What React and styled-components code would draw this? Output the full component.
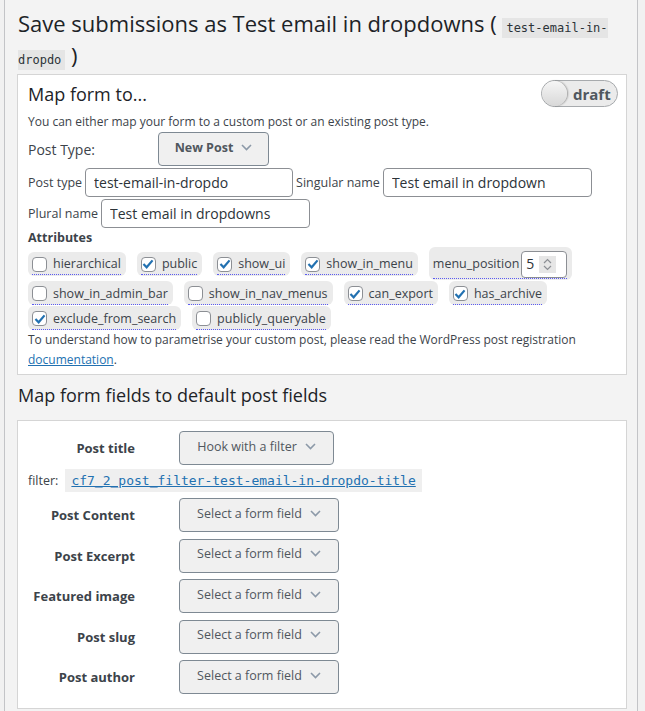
import React from 'react';
import styled, { createGlobalStyle } from 'styled-components';

const Global = createGlobalStyle`
  body {
    margin: 0;
    background: #f1f1f1;
    font-family: "Open Sans", "Noto Sans", sans-serif;
    color: #3c434a;
  }
`;

const Page = styled.div`
  padding: 0 7px 0 4px;
`;

const Panel = styled.div`
  background: #f3f3f3;
  border-left: 1px solid #c3c4c7;
  border-right: 1px solid #c3c4c7;
  padding: 7px 10px 2px 12px;
  min-height: 711px;
  box-sizing: border-box;
`;

const Title = styled.h2`
  margin: 0 0 3px 1px;
  font-size: 22px;
  font-weight: 400;
  line-height: 32px;
  color: #1d2327;
`;

const Code = styled.code`
  font-family: "DejaVu Sans Mono", monospace;
  font-size: 12px;
  line-height: 1;
  background: #e5e5e5;
  padding: 3px 4px;
  color: #2c3338;
`;

const Box = styled.div`
  background: #fff;
  border: 1px solid #d5d5d5;
  padding: ${p => p.$pad || '5px 8px 4px 10px'};
`;

const BoxHead = styled.div`
  display: flex;
  justify-content: space-between;
  align-items: center;
`;

const BoxTitle = styled.h3`
  margin: 0;
  font-size: 18px;
  font-weight: 400;
  color: #1d2327;
`;

const Toggle = styled.div`
  display: flex;
  align-items: center;
  width: 77px;
  height: 27px;
  box-sizing: border-box;
  border: 1px solid #a7aaad;
  border-radius: 14px;
  background: #ebebeb;
  gap: 6px;
`;

const Knob = styled.span`
  width: 25px;
  height: 25px;
  border-radius: 50%;
  background: linear-gradient(#f6f6f6, #d8d8d8);
  box-shadow: 1px 0 2px rgba(0, 0, 0, 0.35);
`;

const ToggleText = styled.span`
  font-weight: 700;
  font-size: 15px;
  color: #50575e;
`;

const Note = styled.p`
  margin: ${p => p.$m || '7px 0 0'};
  font-size: 12px;
  line-height: 20px;
`;

const Row = styled.div`
  display: flex;
  align-items: center;
  gap: ${p => p.$gap || '3px'};
  margin-top: ${p => p.$mt || '2px'};
`;

const Label = styled.span`
  font-size: ${p => p.$size || '12.5px'};
  width: ${p => p.$w || 'auto'};
`;

const DropButton = styled.button`
  display: inline-flex;
  align-items: center;
  justify-content: center;
  gap: 8px;
  width: ${p => p.$w};
  height: ${p => p.$h || '34px'};
  background: #f0f0f0;
  border: 1px solid #7e8993;
  border-radius: 4px;
  font-family: inherit;
  font-size: 12.5px;
  font-weight: ${p => (p.$bold ? 700 : 400)};
  color: #50575e;
  padding: 0 0 4px;
`;

const TextInput = styled.input`
  width: ${p => p.$w};
  height: 29px;
  box-sizing: border-box;
  border: 1px solid #8c8f94;
  border-radius: 4px;
  font-family: inherit;
  font-size: 14px;
  color: #2c3338;
  padding: 0 8px;
`;

const SubHead = styled.div`
  font-size: 12.5px;
  font-weight: 700;
  line-height: 16px;
  margin-top: 2px;
`;

const Chips = styled.div`
  display: flex;
  flex-wrap: wrap;
  align-items: center;
  column-gap: 11px;
  row-gap: 1px;
  margin-top: ${p => p.$mt || '0'};
`;

const Chip = styled.label`
  display: inline-flex;
  align-items: center;
  box-sizing: border-box;
  background: #ebebeb;
  border-radius: 6px;
  padding: 2px 5px 0 4px;
  height: ${p => p.$h || '24px'};
`;

const ChipInner = styled.span`
  display: inline-flex;
  align-items: center;
  gap: 6px;
  border-bottom: 1px dotted #5b5bf0;
  font-size: 12.5px;
  color: #3c434a;
  line-height: 20px;
`;

const Box16 = styled.span`
  width: 13px;
  height: 13px;
  border: 1px solid #8c8f94;
  border-radius: 4px;
  background: #fff;
  display: inline-flex;
  align-items: center;
  justify-content: center;
`;

const NumberBox = styled.span`
  display: inline-flex;
  align-items: center;
  gap: 5px;
  height: 27px;
  width: 46px;
  box-sizing: border-box;
  border: 1px solid #8c8f94;
  border-radius: 4px;
  background: #fff;
  padding: 0 4px;
  margin-left: -4px;
  font-size: 14px;
  color: #2c3338;
`;

const Spin = styled.span`
  width: 17px;
  height: 17px;
  background: #e6e6e6;
  display: inline-flex;
  align-items: center;
  justify-content: center;
`;

const Link = styled.a`
  color: #2271b1;
  text-decoration: underline;
`;

const SectionTitle = styled.h3`
  margin: 8px 0 13px 1px;
  font-size: 18px;
  font-weight: 400;
  color: #1d2327;
`;

const FieldGrid = styled.div`
  display: flex;
  flex-direction: column;
  gap: 6.5px;
`;

const FieldRow = styled.div`
  display: flex;
  align-items: center;
  gap: 44px;
`;

const FieldLabel = styled.span`
  width: 107px;
  text-align: right;
  font-size: 13px;
  font-weight: 700;
  color: #3c434a;
`;

const FilterLine = styled.div`
  display: flex;
  align-items: center;
  gap: 7px;
  font-size: 12.5px;
  margin: -3px 0 0;
`;

const FilterCode = styled.code`
  font-family: "DejaVu Sans Mono", monospace;
  font-size: 13px;
  background: #efefef;
  padding: 4px 6px;
  color: #2271b1;
  text-decoration: underline;
`;

const Chevron = () => (
  <svg width="11" height="7" viewBox="0 0 11 7">
    <path d="M1 1l4.5 4.5L10 1" fill="none" stroke="#8c99a8" strokeWidth="1.6" />
  </svg>
);

const Check = () => (
  <svg width="12" height="10" viewBox="0 0 13 11">
    <path d="M1.5 5.5l3.5 3.6L11.5 1.5" fill="none" stroke="#2271b1" strokeWidth="2.4" />
  </svg>
);

const Attr = ({ name, on }) => (
  <Chip>
    <ChipInner>
      <Box16>{on && <Check />}</Box16>
      {name}
    </ChipInner>
  </Chip>
);

const fields = ['Post Content', 'Post Excerpt', 'Featured image', 'Post slug', 'Post author'];

export default function App() {
  return (
    <Page>
      <Global />
      <Panel>
        <Title>
          Save submissions as Test email in dropdowns ( <Code>test-email-in-dropdo</Code> )
        </Title>
        <Box>
          <BoxHead>
            <BoxTitle>Map form to...</BoxTitle>
            <Toggle>
              <Knob />
              <ToggleText>draft</ToggleText>
            </Toggle>
          </BoxHead>
          <Note $m="5px 0 0">You can either map your form to a custom post or an existing post type.</Note>
          <Row $gap="0" $mt="0">
            <Label $size="14px" $w="130px">Post Type:</Label>
            <DropButton $w="111px" $bold>New Post <Chevron /></DropButton>
          </Row>
          <Row $mt="2px">
            <Label>Post type</Label>
            <TextInput $w="208px" defaultValue="test-email-in-dropdo" />
            <Label>Singular name</Label>
            <TextInput $w="209px" defaultValue="Test email in dropdown" />
          </Row>
          <Row $mt="2px">
            <Label>Plural name</Label>
            <TextInput $w="209px" defaultValue="Test email in dropdowns" />
          </Row>
          <SubHead>Attributes</SubHead>
          <Chips $mt="1px">
            <Attr name="hierarchical" />
            <Attr name="public" on />
            <Attr name="show_ui" on />
            <Attr name="show_in_menu" on />
            <Chip $h="33px">
              <ChipInner>
                menu_position
                <NumberBox>
                  5
                  <Spin>
                    <svg width="9" height="13" viewBox="0 0 9 13">
                      <path d="M1 5l3.5-3.5L8 5M1 8l3.5 3.5L8 8" fill="none" stroke="#8c8f94" strokeWidth="1.2" />
                    </svg>
                  </Spin>
                </NumberBox>
              </ChipInner>
            </Chip>
            <Attr name="show_in_admin_bar" />
            <Attr name="show_in_nav_menus" />
            <Attr name="can_export" on />
            <Attr name="has_archive" on />
            <Attr name="exclude_from_search" on />
            <Attr name="publicly_queryable" />
          </Chips>
          <Note $m="0">
            To understand how to parametrise your custom post, please read the WordPress post registration{' '}
            <Link href="#">documentation</Link>.
          </Note>
        </Box>
        <SectionTitle>Map form fields to default post fields</SectionTitle>
        <Box $pad="10px 10px 14px 10px">
          <FieldGrid>
            <FieldRow>
              <FieldLabel>Post title</FieldLabel>
              <DropButton $w="155px">Hook with a filter <Chevron /></DropButton>
            </FieldRow>
            <FilterLine>
              filter: <FilterCode>cf7_2_post_filter-test-email-in-dropdo-title</FilterCode>
            </FilterLine>
            {fields.map(f => (
              <FieldRow key={f}>
                <FieldLabel>{f}</FieldLabel>
                <DropButton $w="160px">Select a form field <Chevron /></DropButton>
              </FieldRow>
            ))}
          </FieldGrid>
        </Box>
      </Panel>
    </Page>
  );
}
